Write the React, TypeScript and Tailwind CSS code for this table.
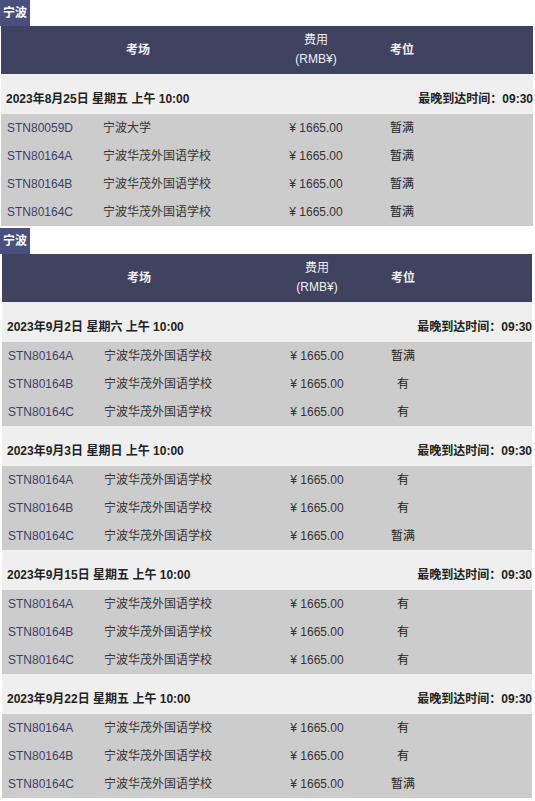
import React from 'react'

type Row = { code: string; name: string; seat: string }
type Session = { date: string; rows: Row[] }

const HUAMAO = '宁波华茂外国语学校'

const blocks: { shift: string; sessions: Session[] }[] = [
  {
    shift: 'ml-[1px] w-[532px]',
    sessions: [
      {
        date: '2023年8月25日 星期五 上午 10:00',
        rows: [
          { code: 'STN80059D', name: '宁波大学', seat: '暂满' },
          { code: 'STN80164A', name: HUAMAO, seat: '暂满' },
          { code: 'STN80164B', name: HUAMAO, seat: '暂满' },
          { code: 'STN80164C', name: HUAMAO, seat: '暂满' },
        ],
      },
    ],
  },
  {
    shift: 'ml-[2px] w-[530px]',
    sessions: [
      {
        date: '2023年9月2日 星期六 上午 10:00',
        rows: [
          { code: 'STN80164A', name: HUAMAO, seat: '暂满' },
          { code: 'STN80164B', name: HUAMAO, seat: '有' },
          { code: 'STN80164C', name: HUAMAO, seat: '有' },
        ],
      },
      {
        date: '2023年9月3日 星期日 上午 10:00',
        rows: [
          { code: 'STN80164A', name: HUAMAO, seat: '有' },
          { code: 'STN80164B', name: HUAMAO, seat: '有' },
          { code: 'STN80164C', name: HUAMAO, seat: '暂满' },
        ],
      },
      {
        date: '2023年9月15日 星期五 上午 10:00',
        rows: [
          { code: 'STN80164A', name: HUAMAO, seat: '有' },
          { code: 'STN80164B', name: HUAMAO, seat: '有' },
          { code: 'STN80164C', name: HUAMAO, seat: '有' },
        ],
      },
      {
        date: '2023年9月22日 星期五 上午 10:00',
        rows: [
          { code: 'STN80164A', name: HUAMAO, seat: '有' },
          { code: 'STN80164B', name: HUAMAO, seat: '有' },
          { code: 'STN80164C', name: HUAMAO, seat: '暂满' },
        ],
      },
    ],
  },
]

function Block({ shift, sessions }: { shift: string; sessions: Session[] }) {
  return (
    <div>
      {/* 城市标签 */}
      <div className="w-[30px] h-[26px] bg-[#4b4f7e] text-white text-[12px] font-bold flex items-center justify-center">
        宁波
      </div>
      <div className={shift}>
        {/* 表头 */}
        <div className="flex h-[48px] bg-[#40435f] text-[#eef0f6] text-[12px] items-center">
          <div className="w-[274px] text-center font-bold">考场</div>
          <div className="w-[82px] text-center leading-[19px]">
            费用
            <br />
            (RMB¥)
          </div>
          <div className="w-[90px] text-center font-bold">考位</div>
        </div>

        {sessions.map((s) => (
          <div key={s.date}>
            <div className="flex h-[40px] bg-[#efefef] items-end pb-[6px] text-[12px] font-bold text-[#222]">
              <div className="pl-[5px] flex-1">{s.date}</div>
              <div>最晚到达时间：09:30</div>
            </div>
            <div className="bg-[#cccccc]">
              {s.rows.map((r) => (
                <div key={r.code} className="flex h-[28px] items-center text-[12px]">
                  <div className="w-[97px] pl-[6px] text-[#3b3f6a]">{r.code}</div>
                  <div className="w-[177px] pl-[5px] text-[#333]">{r.name}</div>
                  <div className="w-[82px] text-center text-[#333]">¥ 1665.00</div>
                  <div className="w-[90px] text-center text-[#222]">{r.seat}</div>
                </div>
              ))}
            </div>
          </div>
        ))}
      </div>
    </div>
  )
}

export default function App() {
  return (
    <div
      className="w-[535px] h-[801px] bg-white overflow-hidden flex flex-col gap-[2px]"
      style={{ fontFamily: '"Liberation Sans", Arial, "Noto Sans CJK SC", sans-serif' }}
    >
      {blocks.map((b, i) => (
        <Block key={i} shift={b.shift} sessions={b.sessions} />
      ))}
    </div>
  )
}
